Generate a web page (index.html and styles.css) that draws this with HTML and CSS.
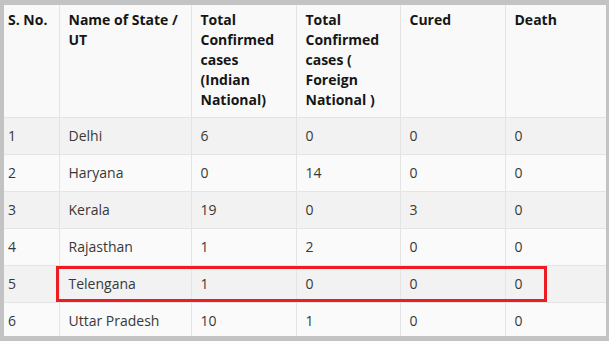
FILE: index.html
```html
<!DOCTYPE html>
<html>
<head>
<meta charset="utf-8">
<link rel="stylesheet" href="styles.css">
</head>
<body>
<div class="frame">
  <table class="cases">
    <colgroup>
      <col class="c1"><col class="c2"><col class="c3"><col class="c4"><col class="c5"><col class="c6">
    </colgroup>
    <thead>
      <tr>
        <th>S. No.</th>
        <th>Name of State / UT</th>
        <th>Total Confirmed cases (Indian National)</th>
        <th>Total Confirmed cases ( Foreign National )</th>
        <th>Cured</th>
        <th>Death</th>
      </tr>
    </thead>
    <tbody>
      <tr><td>1</td><td>Delhi</td><td>6</td><td>0</td><td>0</td><td>0</td></tr>
      <tr><td>2</td><td>Haryana</td><td>0</td><td>14</td><td>0</td><td>0</td></tr>
      <tr><td>3</td><td>Kerala</td><td>19</td><td>0</td><td>3</td><td>0</td></tr>
      <tr><td>4</td><td>Rajasthan</td><td>1</td><td>2</td><td>0</td><td>0</td></tr>
      <tr><td>5</td><td>Telengana</td><td>1</td><td>0</td><td>0</td><td>0</td></tr>
      <tr><td>6</td><td>Uttar Pradesh</td><td>10</td><td>1</td><td>0</td><td>0</td></tr>
    </tbody>
  </table>
  <div class="highlight"></div>
</div>
</body>
</html>
```

FILE: styles.css
```css
html, body {
  margin: 0;
  padding: 0;
}
body {
  background: #c3c3c3;
  padding: 5px 3px 0 4px;
  font-family: "Open Sans", "Liberation Sans", sans-serif;
  font-size: 14px;
}
.frame {
  position: relative;
  height: 331px;
  overflow: hidden;
  background: #fafafa;
}
.cases {
  border-collapse: collapse;
  table-layout: fixed;
  width: 602px;
}
.c1 { width: 55px; }
.c2 { width: 132px; }
.c3 { width: 105px; }
.c4 { width: 104px; }
.c5 { width: 105px; }
.c6 { width: 101px; }
.cases th,
.cases td {
  border: 1px solid #e4e4e4;
  line-height: 20px;
  text-align: left;
  padding: 8px 9px;
}
.cases tr > :first-child {
  border-left: none;
  padding-left: 4px;
}
.cases tr > :last-child {
  border-right: none;
}
.cases thead th {
  border-top: none;
  background: #f9f9f9;
  color: #161616;
  font-weight: 700;
  vertical-align: top;
  padding-top: 5px;
  padding-bottom: 7px;
}
.cases td {
  color: #383838;
  vertical-align: middle;
}
.cases tbody tr:nth-child(odd) td {
  background: #f2f2f2;
}
.cases tbody tr:nth-child(even) td {
  background: #fafafa;
}
.highlight {
  position: absolute;
  left: 52px;
  top: 261px;
  width: 491px;
  height: 36px;
  box-sizing: border-box;
  border: 3px solid #ed1c24;
}
```
